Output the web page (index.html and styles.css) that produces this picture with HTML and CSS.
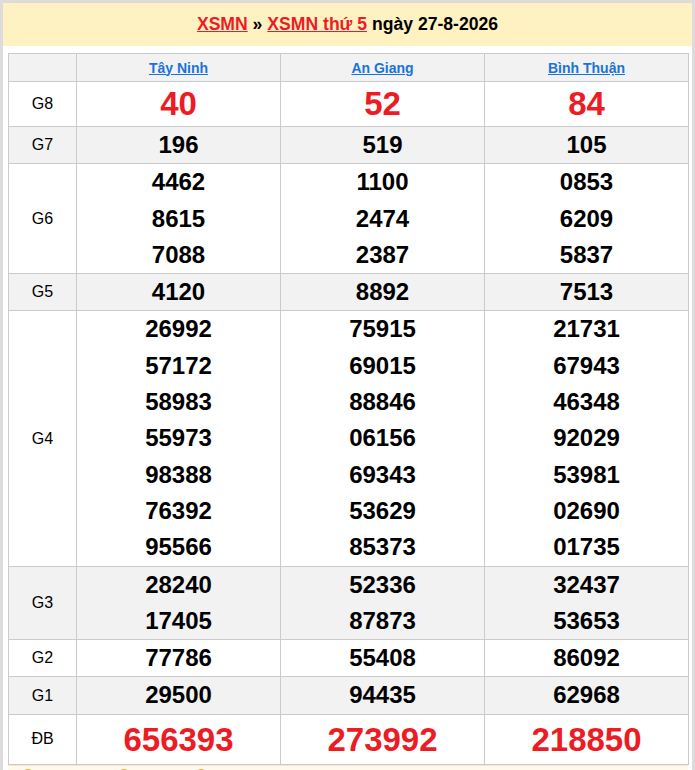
FILE: index.html
```html
<!DOCTYPE html>
<html lang="vi">
<head>
<meta charset="utf-8">
<title>XSMN thứ 5 ngày 27-8-2026</title>
<link rel="stylesheet" href="styles.css">
</head>
<body>
<div class="page">
  <div class="box">
    <h2 class="title"><a href="#">XSMN</a> » <a href="#">XSMN thứ 5</a> ngày 27-8-2026</h2>
    <div class="content">
      <table class="kq">
        <colgroup><col class="c-lbl"><col class="c-prov"><col class="c-prov"><col class="c-prov"></colgroup>
        <thead>
          <tr class="gray">
            <th></th>
            <th><a href="#">Tây Ninh</a></th>
            <th><a href="#">An Giang</a></th>
            <th><a href="#">Bình Thuận</a></th>
          </tr>
        </thead>
        <tbody>
          <tr class="g8">
            <td class="lbl">G8</td>
            <td><div class="n red big">40</div></td>
            <td><div class="n red big">52</div></td>
            <td><div class="n red big">84</div></td>
          </tr>
          <tr class="gray">
            <td class="lbl">G7</td>
            <td><div class="n">196</div></td>
            <td><div class="n">519</div></td>
            <td><div class="n">105</div></td>
          </tr>
          <tr>
            <td class="lbl">G6</td>
            <td><div class="n">4462</div><div class="n">8615</div><div class="n">7088</div></td>
            <td><div class="n">1100</div><div class="n">2474</div><div class="n">2387</div></td>
            <td><div class="n">0853</div><div class="n">6209</div><div class="n">5837</div></td>
          </tr>
          <tr class="gray">
            <td class="lbl">G5</td>
            <td><div class="n">4120</div></td>
            <td><div class="n">8892</div></td>
            <td><div class="n">7513</div></td>
          </tr>
          <tr>
            <td class="lbl">G4</td>
            <td><div class="n">26992</div><div class="n">57172</div><div class="n">58983</div><div class="n">55973</div><div class="n">98388</div><div class="n">76392</div><div class="n">95566</div></td>
            <td><div class="n">75915</div><div class="n">69015</div><div class="n">88846</div><div class="n">06156</div><div class="n">69343</div><div class="n">53629</div><div class="n">85373</div></td>
            <td><div class="n">21731</div><div class="n">67943</div><div class="n">46348</div><div class="n">92029</div><div class="n">53981</div><div class="n">02690</div><div class="n">01735</div></td>
          </tr>
          <tr class="gray">
            <td class="lbl">G3</td>
            <td><div class="n">28240</div><div class="n">17405</div></td>
            <td><div class="n">52336</div><div class="n">87873</div></td>
            <td><div class="n">32437</div><div class="n">53653</div></td>
          </tr>
          <tr>
            <td class="lbl">G2</td>
            <td><div class="n">77786</div></td>
            <td><div class="n">55408</div></td>
            <td><div class="n">86092</div></td>
          </tr>
          <tr class="gray">
            <td class="lbl">G1</td>
            <td><div class="n">29500</div></td>
            <td><div class="n">94435</div></td>
            <td><div class="n">62968</div></td>
          </tr>
          <tr class="db">
            <td class="lbl">ĐB</td>
            <td><div class="n red big db-n">656393</div></td>
            <td><div class="n red big db-n">273992</div></td>
            <td><div class="n red big db-n">218850</div></td>
          </tr>
        </tbody>
      </table>
      <div class="filter">
        <span class="dot d1"></span>
        <span class="dot d2"></span>
        <span class="dot d3"></span>
      </div>
    </div>
  </div>
</div>
</body>
</html>
```

FILE: styles.css
```css
html, body {
  margin: 0;
  padding: 0;
  background: #dcdcdc;
  font-family: "Liberation Sans", Arial, sans-serif;
}
.page {
  padding: 3px 3px 0 3px;
}
.box {
  background: #fff;
  min-height: 767px;
}
.title {
  margin: 0;
  height: 43px;
  line-height: 43px;
  background: #fff2c2;
  text-align: center;
  font-size: 17.6px;
  font-weight: bold;
  color: #000;
}
.title a {
  color: #ed1c24;
  text-decoration: underline;
}
.content {
  padding: 7px 4px 0 5px;
}
.kq {
  width: 681px;
  border-collapse: collapse;
  table-layout: fixed;
}
.c-lbl { width: 68px; }
.kq th, .kq td {
  border: 1px solid #cbcbcb;
  padding: 0;
  text-align: center;
  vertical-align: middle;
}
.kq th {
  height: 27px;
  font-size: 14px;
  font-weight: bold;
}
.kq th a {
  color: #1a73d9;
  text-decoration: underline;
}
.gray { background: #f2f2f2; }
.lbl {
  font-size: 16px;
  color: #000;
}
.n {
  font-size: 24px;
  font-weight: bold;
  line-height: 36.3px;
  color: #000;
}
.n.big {
  font-size: 33px;
  line-height: 44px;
}
.n.db-n {
  line-height: 49px;
}
.red { color: #ed1c24; }
.filter {
  width: 680px;
  height: 12px;
  background: #fff9ec;
  position: relative;
  overflow: hidden;
  border-top: 1px solid #f2e6cf;
}
.dot {
  position: absolute;
  top: 3px;
  width: 12px;
  height: 12px;
  border-radius: 50%;
  background: #f5a623;
}
.d1 { left: 14px; }
.d2 { left: 110px; }
.d3 { left: 187px; }
```
